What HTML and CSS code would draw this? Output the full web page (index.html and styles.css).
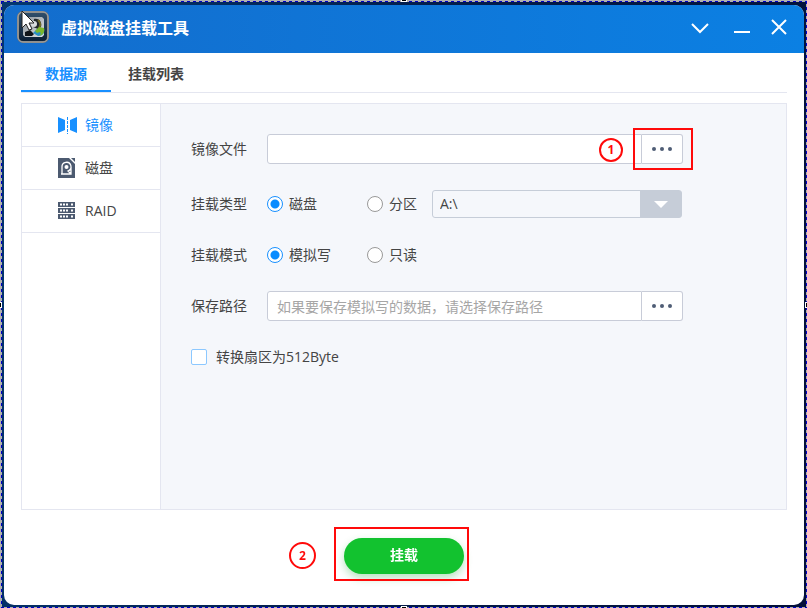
FILE: index.html
```html
<!DOCTYPE html>
<html lang="zh-CN">
<head>
    <meta charset="UTF-8">
    <meta name="viewport" content="width=device-width, initial-scale=1.0">
    <title>虚拟磁盘挂载工具</title>
    <link rel="stylesheet" href="styles.css">
</head>
<body>
    <div class="selection">
        <span class="handle handle-top"></span>
        <span class="handle handle-bottom"></span>
        <span class="handle handle-left"></span>
        <span class="handle handle-right"></span>
    </div>

    <div class="window">
        <header class="titlebar">
            <svg class="logo" viewBox="0 0 32 32" aria-hidden="true">
                <defs>
                    <linearGradient id="logo-bg" x1="0" y1="0" x2="0" y2="1">
                        <stop offset="0" stop-color="#31506c"/>
                        <stop offset="1" stop-color="#0a1d33"/>
                    </linearGradient>
                    <linearGradient id="logo-disk" x1="0" y1="0" x2="1" y2="1">
                        <stop offset="0" stop-color="#8d959c"/>
                        <stop offset="1" stop-color="#dfe3e6"/>
                    </linearGradient>
                </defs>
                <rect x="1" y="1" width="30" height="30" rx="5" fill="url(#logo-bg)" stroke="#77787a" stroke-width="2"/>
                <rect x="1" y="1" width="30" height="30" rx="5" fill="none" stroke="#aaa8a2" stroke-width="1"/>
                <path d="M8 6h17l2 2v16l-2 2H8l-2-2V8z" fill="url(#logo-disk)"/>
                <path d="M8 21l5-2 4 4-2 2H8z" fill="#101418"/>
                <path d="M17 8c6-1 8 4 7 8l-3 2-5-2z" fill="#24292d"/>
                <circle cx="17" cy="13" r="3" fill="#d9dcde"/>
                <path d="M21 9c3 3 3 5 1 8" fill="none" stroke="#6f6a25" stroke-width="2"/>
                <path d="M16 22l4-4 1 3c3 0 5-1 6-4 1 5-1 8-6 8z" fill="#2a8fc4"/>
                <path d="M18 20l4-4 5 1c1 4-1 7-5 8 2-2 2-3 1-4l-3 1z" fill="#7cb82c"/>
                <path d="M5 0v17l4-4 3 6 3-1-3-6h5z" fill="#fff" stroke="#222" stroke-width="1"/>
            </svg>
            <h1 class="title">虚拟磁盘挂载工具</h1>
            <div class="window-buttons">
                <button class="window-button" type="button" aria-label="菜单">
                    <svg viewBox="0 0 18 18"><path d="M1 6l8 8 8-8"/></svg>
                </button>
                <button class="window-button" type="button" aria-label="最小化">
                    <svg viewBox="0 0 18 18"><path d="M1 14h16"/></svg>
                </button>
                <button class="window-button" type="button" aria-label="关闭">
                    <svg viewBox="0 0 18 18"><path d="M2 2l14 14M16 2L2 16"/></svg>
                </button>
            </div>
        </header>

        <nav class="tabs">
            <a class="tab active" href="#source">数据源</a>
            <a class="tab" href="#list">挂载列表</a>
        </nav>

        <main class="panel">
            <nav class="sidebar">
                <a class="side-item active" href="#image">
                    <svg class="side-icon" viewBox="0 0 20 20" aria-hidden="true">
                        <path d="M1 2l7 3v10l-7 3zM20 2l-7 3v10l7 3z" fill="currentColor"/>
                        <path d="M10.5 2v17" stroke="currentColor" stroke-dasharray="3 1"/>
                    </svg>
                    镜像
                </a>
                <a class="side-item" href="#disk">
                    <svg class="side-icon" viewBox="0 0 20 20" aria-hidden="true">
                        <path d="M1 0h11l6 6v14H1z" fill="#4c5a70"/>
                        <path d="M14 0h4v4z" fill="#4c5a70"/>
                        <path d="M5 16V9a4.5 4.5 0 1 1 6 4l3 3M4 16h10V9" fill="none" stroke="#fff" stroke-width="1.3"/>
                        <circle cx="9.5" cy="9" r="2" fill="#fff"/>
                    </svg>
                    磁盘
                </a>
                <a class="side-item" href="#raid">
                    <svg class="side-icon" viewBox="0 0 20 20" aria-hidden="true">
                        <path d="M1 1h17v5H1zM1 7h17v5H1zM1 13h17v5H1z" fill="#4c5a70"/>
                        <path d="M3 3.5h9M3 9.5h9M3 15.5h9" stroke="#fff" stroke-width="2" stroke-dasharray="2 1"/>
                        <path d="M14 3.5h2M14 9.5h2M14 15.5h2" stroke="#fff" stroke-width="2"/>
                    </svg>
                    RAID
                </a>
            </nav>

            <form class="form">
                <div class="row row-file">
                    <label class="label" for="image-file">镜像文件</label>
                    <div class="picker">
                        <input class="path" id="image-file" type="text">
                        <button class="browse" type="button" aria-label="浏览镜像文件"><i></i><i></i><i></i></button>
                        <span class="step step-file">1</span>
                        <span class="mark mark-file"></span>
                    </div>
                </div>

                <div class="row" role="radiogroup" aria-labelledby="type-label">
                    <span class="label" id="type-label">挂载类型</span>
                    <label class="option"><input type="radio" name="type" checked>磁盘</label>
                    <label class="option"><input type="radio" name="type">分区</label>
                    <select class="drive" aria-label="盘符" disabled>
                        <option>A:\</option>
                    </select>
                </div>

                <div class="row" role="radiogroup" aria-labelledby="mode-label">
                    <span class="label" id="mode-label">挂载模式</span>
                    <label class="option"><input type="radio" name="mode" checked>模拟写</label>
                    <label class="option"><input type="radio" name="mode">只读</label>
                </div>

                <div class="row">
                    <label class="label" for="save-path">保存路径</label>
                    <div class="picker">
                        <input class="path" id="save-path" type="text" placeholder="如果要保存模拟写的数据，请选择保存路径">
                        <button class="browse" type="button" aria-label="浏览保存路径"><i></i><i></i><i></i></button>
                    </div>
                </div>

                <div class="row">
                    <label class="check"><input type="checkbox">转换扇区为512Byte</label>
                </div>
            </form>
        </main>

        <footer class="footer">
            <div class="action">
                <button class="mount" type="button">挂载</button>
                <span class="step step-mount">2</span>
                <span class="mark mark-mount"></span>
            </div>
        </footer>
    </div>
</body>
</html>
```
FILE: styles.css
```css
* {
    box-sizing: border-box;
}
body {
    margin: 0;
    padding: 5px 3px 3px 4px;
    min-height: 100vh;
    display: flex;
    background: linear-gradient(100deg, #04376f, #031c4a 50%, #020f38);
    color: #444;
    font-family: "Open Sans", "Noto Sans CJK SC", sans-serif;
    font-size: 14px;
    line-height: 20px;
}
button, input, select {
    font: inherit;
    color: inherit;
    margin: 0;
}
a {
    color: inherit;
    text-decoration: none;
}

/* dashed frame with handles round the window */
.selection {
    position: fixed;
    inset: 0;
    border: solid #b0b0b0;
    border-width: 1px 0 0 1px;
    pointer-events: none;
}
.selection::before {
    content: "";
    position: absolute;
    inset: 0;
    background:
        repeating-linear-gradient(90deg, #0000c8 0 3px, #b0b0b0 3px 6px) top / 100% 1px no-repeat,
        repeating-linear-gradient(90deg, #0000c8 0 3px, #b0b0b0 3px 6px) bottom / 100% 1px no-repeat,
        repeating-linear-gradient(#0000c8 0 3px, #b0b0b0 3px 6px) left / 1px 100% no-repeat,
        repeating-linear-gradient(#0000c8 0 3px, #b0b0b0 3px 6px) right / 1px 100% no-repeat;
}
.handle {
    position: absolute;
    background: #000;
    border: 1px solid #fff;
}
.handle-top, .handle-bottom {
    left: 50%;
    width: 6px;
    height: 2px;
    margin-left: -3px;
}
.handle-left, .handle-right {
    top: 50%;
    width: 2px;
    height: 6px;
    margin-top: -3px;
}
.handle-top {
    top: -1px;
    border-top: 0;
}
.handle-bottom {
    bottom: 0;
    border-bottom: 0;
}
.handle-left {
    left: -1px;
    border-left: 0;
}
.handle-right {
    right: 0;
    border-right: 0;
}

.window {
    flex: 1;
    display: flex;
    flex-direction: column;
    background: #fff;
    border-radius: 10px;
    overflow: hidden;
}
.titlebar {
    display: flex;
    align-items: center;
    height: 48px;
    padding: 0 16px 0 13px;
    background: linear-gradient(90deg, #136dcd, #0b80e3);
    color: #fff;
}
.logo {
    width: 32px;
    height: 32px;
    margin-right: 12px;
    margin-bottom: 4px;
}
.title {
    flex: 1;
    margin: 0 0 2px;
    font-size: 16px;
    line-height: 24px;
    font-weight: 700;
}
.window-buttons {
    display: flex;
    align-items: center;
    margin-bottom: 4px;
}
.window-button {
    display: flex;
    width: 18px;
    height: 18px;
    padding: 0;
    border: none;
    background: none;
    cursor: pointer;
}
.window-button + .window-button {
    margin-left: 24px;
}
.window-button:last-child {
    margin-left: 19px;
}
.window-button svg {
    width: 18px;
    height: 18px;
    fill: none;
    stroke: #fff;
    stroke-width: 2;
}

.tabs {
    display: flex;
    height: 40px;
    margin: 0 17px;
    border-bottom: 1px solid #e4e6f0;
    font-weight: 700;
}
.tab {
    padding: 11px 17px 0;
}
.tab.active {
    width: 90px;
    padding: 11px 0 0;
    border-bottom: 2px solid #1890ff;
    color: #1890ff;
    text-align: center;
}

.panel {
    flex: 1;
    display: flex;
    margin: 10px 17px 0;
    border: 1px solid #e4e6f0;
    background: #f5f7fb;
}
.sidebar {
    width: 139px;
    border-right: 1px solid #e4e6f0;
    background: #fff;
}
.side-item {
    display: flex;
    align-items: center;
    gap: 8px;
    height: 43px;
    padding-left: 35px;
    border-bottom: 1px solid #e4e6f0;
}
.side-item.active {
    color: #1890ff;
}
.side-icon {
    width: 20px;
    height: 20px;
}

.form {
    flex: 1;
    display: flex;
    flex-direction: column;
    gap: 21px;
    padding: 30px;
}
.row {
    display: flex;
    align-items: center;
    height: 30px;
}
.row-file {
    margin-bottom: 4px;
}
.label {
    width: 76px;
}
.picker {
    position: relative;
    display: flex;
    flex: 0 1 416px;
}
.path {
    flex: 1;
    min-width: 0;
    height: 30px;
    padding: 0 9px;
    border: 1px solid #c8ccd8;
    border-radius: 3px 0 0 3px;
    background: #fff;
    outline: none;
}
.path::placeholder {
    color: #a6a6a6;
}
.browse {
    display: flex;
    align-items: center;
    justify-content: center;
    gap: 4px;
    width: 41px;
    height: 30px;
    padding: 0;
    border: 1px solid #c8ccd8;
    border-left: 0;
    border-radius: 0 3px 3px 0;
    background: #fff;
    cursor: pointer;
}
.browse i {
    width: 4px;
    height: 4px;
    border-radius: 50%;
    background: #4f5d75;
}

.option, .check {
    display: flex;
    align-items: center;
}
.option {
    gap: 6px;
    width: 100px;
}
.option:nth-of-type(2) {
    width: 65px;
}
.option input {
    appearance: none;
    width: 16px;
    height: 16px;
    border: 1px solid #999;
    border-radius: 50%;
    background: #fff;
}
.option input:checked {
    border-color: #1890ff;
    background: radial-gradient(circle, #0a8cff 4px, #fff 5px);
}
.check {
    gap: 9px;
}
.check input {
    appearance: none;
    width: 16px;
    height: 16px;
    border: 1px solid #8cc8ff;
    border-radius: 2px;
    background: #fff;
}
.drive {
    appearance: none;
    flex: 0 1 250px;
    height: 28px;
    padding: 0 50px 0 7px;
    border: 1px solid #c6cdd8;
    border-radius: 3px;
    background:
        url("data:image/svg+xml,%3Csvg xmlns='http://www.w3.org/2000/svg' width='42' height='28'%3E%3Cpath fill='%23c6cdd8' d='M0 0h42v28H0z'/%3E%3Cpath fill='%23fff' d='M14 11h14l-7 7z'/%3E%3C/svg%3E") right center no-repeat border-box,
        #f5f7fb;
    color: #444;
    opacity: 1;
}

.footer {
    display: flex;
    justify-content: center;
    padding: 28px 0 31px;
}
.action {
    position: relative;
}
.mount {
    display: block;
    width: 120px;
    height: 36px;
    padding: 0 0 2px;
    border: none;
    border-radius: 18px;
    background: #12c22f;
    box-shadow: 0 4px 8px rgba(18, 160, 47, 0.3);
    color: #fff;
    font-weight: 700;
    cursor: pointer;
}

/* red step marks */
.mark {
    position: absolute;
    border: 2px solid #ff0a0a;
    pointer-events: none;
}
.mark-file {
    inset: -6px -10px;
    left: auto;
    width: 60px;
}
.mark-mount {
    inset: -11px -5px -7px -10px;
}
.step {
    position: absolute;
    display: flex;
    align-items: center;
    justify-content: center;
    border: 2px solid #ff0a0a;
    border-radius: 50%;
    color: #ff0a0a;
    font-family: "Noto Sans", sans-serif;
    font-size: 12px;
    font-weight: 700;
    pointer-events: none;
}
.step-file {
    right: 60px;
    top: 4px;
    width: 24px;
    height: 24px;
}
.step-mount {
    left: -55px;
    top: 4px;
    width: 27px;
    height: 27px;
}
```
